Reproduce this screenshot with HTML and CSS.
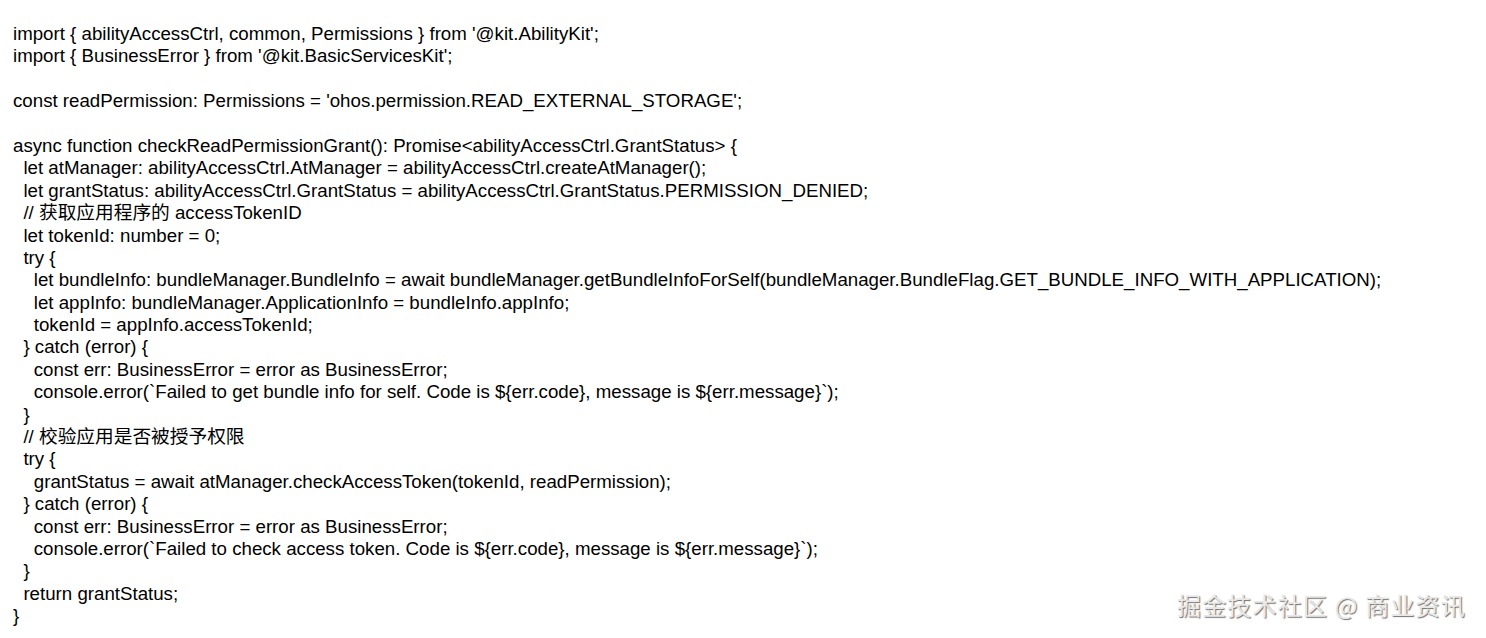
FILE: index.html
```html
<!DOCTYPE html>
<html>
<head>
<meta charset="utf-8">
<link rel="stylesheet" href="styles.css">
</head>
<body>
<div class="code">
<div class="ln">import { abilityAccessCtrl, common, Permissions } from '@kit.AbilityKit';</div>
<div class="ln">import { BusinessError } from '@kit.BasicServicesKit';</div>
<div class="ln blank"></div>
<div class="ln">const readPermission: Permissions = 'ohos.permission.READ_EXTERNAL_STORAGE';</div>
<div class="ln blank"></div>
<div class="ln">async function checkReadPermissionGrant(): Promise&lt;abilityAccessCtrl.GrantStatus&gt; {</div>
<div class="ln">  let atManager: abilityAccessCtrl.AtManager = abilityAccessCtrl.createAtManager();</div>
<div class="ln">  let grantStatus: abilityAccessCtrl.GrantStatus = abilityAccessCtrl.GrantStatus.PERMISSION_DENIED;</div>
<div class="ln">  // 获取应用程序的 accessTokenID</div>
<div class="ln">  let tokenId: number = 0;</div>
<div class="ln">  try {</div>
<div class="ln">    let bundleInfo: bundleManager.BundleInfo = await bundleManager.getBundleInfoForSelf(bundleManager.BundleFlag.GET_BUNDLE_INFO_WITH_APPLICATION);</div>
<div class="ln">    let appInfo: bundleManager.ApplicationInfo = bundleInfo.appInfo;</div>
<div class="ln">    tokenId = appInfo.accessTokenId;</div>
<div class="ln">  } catch (error) {</div>
<div class="ln">    const err: BusinessError = error as BusinessError;</div>
<div class="ln">    console.error(`Failed to get bundle info for self. Code is ${err.code}, message is ${err.message}`);</div>
<div class="ln">  }</div>
<div class="ln">  // 校验应用是否被授予权限</div>
<div class="ln">  try {</div>
<div class="ln">    grantStatus = await atManager.checkAccessToken(tokenId, readPermission);</div>
<div class="ln">  } catch (error) {</div>
<div class="ln">    const err: BusinessError = error as BusinessError;</div>
<div class="ln">    console.error(`Failed to check access token. Code is ${err.code}, message is ${err.message}`);</div>
<div class="ln">  }</div>
<div class="ln">  return grantStatus;</div>
<div class="ln">}</div>
</div>
<div class="watermark">掘金技术社区 @ 商业资讯</div>
</body>
</html>
```
FILE: styles.css
```css
html, body {
  margin: 0;
  padding: 0;
  background: #ffffff;
}
body {
  width: 1486px;
  height: 638px;
  overflow: hidden;
  position: relative;
}
.code {
  display: flex;
  flex-direction: column;
  align-items: flex-start;
  padding: 23px 0 0 13px;
  font-family: "Liberation Sans", "Noto Sans CJK SC", Arial, sans-serif;
  font-size: 18.7px;
  line-height: 22.4px;
  color: #000;
}
.ln {
  white-space: pre;
  height: 22.4px;
}
.blank {
  width: 1px;
}
.watermark {
  position: absolute;
  right: 20px;
  bottom: 21px;
  font-family: "Noto Sans CJK SC", sans-serif;
  font-size: 24px;
  line-height: 1;
  color: #e8e8e8;
  text-shadow: 1px 1px 1px #707070, -1px -1px 0 #ffffff;
  letter-spacing: 1.2px;
}
```
